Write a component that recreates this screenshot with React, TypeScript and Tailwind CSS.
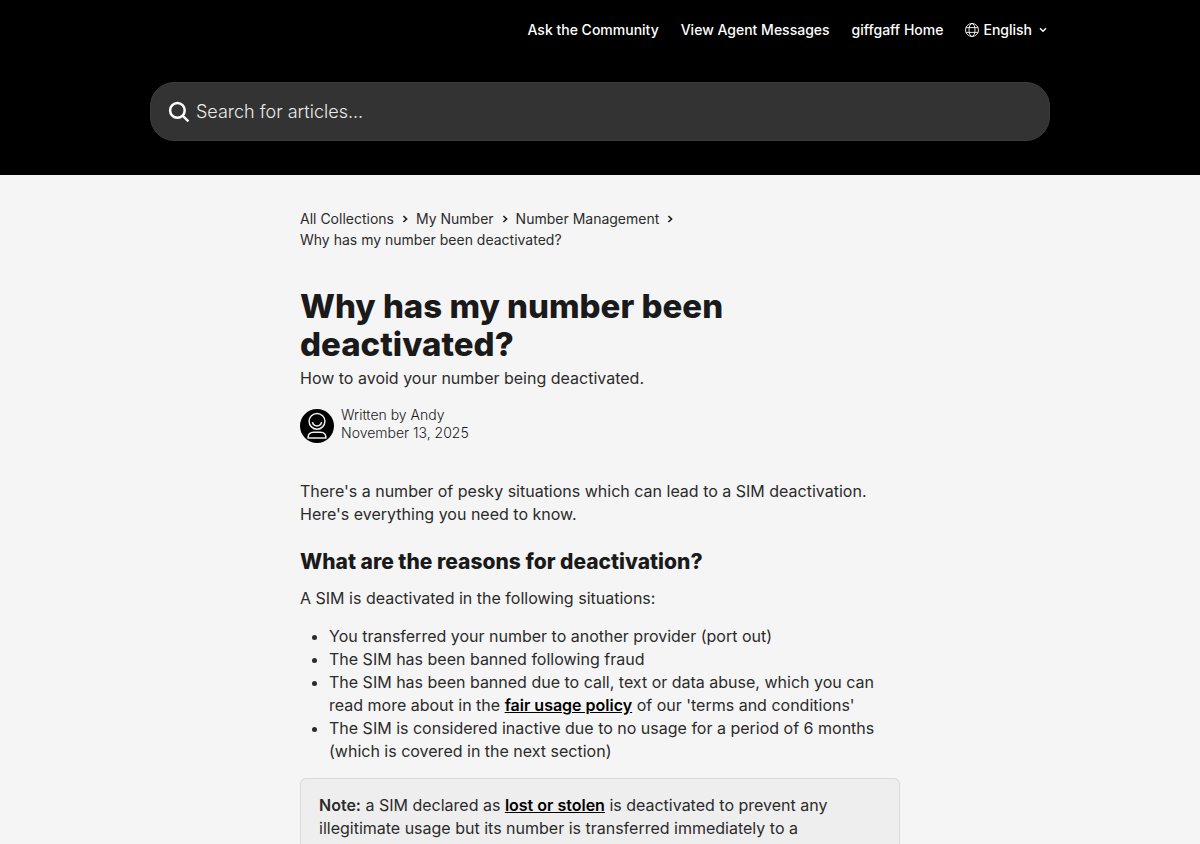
import React from "react";

const navLinks = ["Ask the Community", "View Agent Messages", "giffgaff Home"];
const crumbs = ["All Collections", "My Number", "Number Management"];

function GlobeIcon() {
  return (
    <svg width="14" height="14" viewBox="0 0 14 14" fill="none" stroke="currentColor" strokeWidth="0.9" aria-hidden="true">
      <circle cx="7" cy="7" r="6.5" />
      <ellipse cx="7" cy="7" rx="3" ry="6.5" />
      <path d="M1 4.6h12M1 9.4h12" />
    </svg>
  );
}

function SearchIcon() {
  return (
    <svg width="22" height="22" viewBox="0 0 22 22" fill="none" stroke="white" strokeWidth="2.5" aria-hidden="true">
      <circle cx="9.4" cy="9.4" r="7.3" />
      <path d="M14.6 14.6l5.8 5.8" />
    </svg>
  );
}

function CrumbArrow() {
  return (
    <svg width="6" height="8" viewBox="0 0 6 8" fill="none" stroke="#1a1a1a" strokeWidth="1.6" aria-hidden="true">
      <path d="M1.4 1L4.6 4L1.4 7" />
    </svg>
  );
}

function Avatar() {
  return (
    <svg className="shrink-0" width="34" height="34" viewBox="0 0 34 34" fill="none" stroke="#ededed" strokeWidth="1.5" aria-hidden="true">
      <circle cx="17" cy="17" r="17" fill="black" stroke="none" />
      <circle cx="17" cy="12.3" r="7.9" />
      <path d="M12.4 13.2a4.7 4.7 0 0 0 9.2 0" />
      <path d="M8 29c0-4 2.6-5.8 5.6-5.8h6.8c3 0 5.6 1.8 5.6 5.8z" strokeLinejoin="round" />
    </svg>
  );
}

export default function App() {
  return (
    <div className="min-h-screen bg-[#f5f5f5] font-['Inter',sans-serif] font-normal text-[#1a1a1a]">
      <header className="bg-black px-5 pb-[34px] text-white">
        <div className="mx-auto max-w-[900px]">
          <div className="flex h-[60px] items-center justify-end gap-[22px] text-sm font-medium">
            {navLinks.map((label) => (
              <a key={label} href="#" className="whitespace-nowrap">{label}</a>
            ))}
            <button type="button" className="flex items-center gap-1 pr-[3px]">
              <GlobeIcon />
              <span>English</span>
              <svg className="ml-[3px]" width="8" height="6" viewBox="0 0 8 6" fill="none" stroke="currentColor" strokeWidth="1.5" aria-hidden="true">
                <path d="M1 1.2L4 4.2L7 1.2" />
              </svg>
            </button>
          </div>
          <form className="mt-[22px] flex h-[59px] items-center gap-[6px] rounded-[24px] border border-[#3b3b3b] bg-[#333] pr-5 pl-[17px]">
            <SearchIcon />
            <input
              type="text"
              aria-label="Search for articles..."
              placeholder="Search for articles..."
              className="min-w-0 grow bg-transparent text-lg font-light text-white outline-none placeholder:text-[#ebebeb]"
            />
          </form>
        </div>
      </header>
      <main className="mx-auto max-w-[640px] px-5 pt-[33px]">
        <nav aria-label="Breadcrumb" className="flex flex-wrap items-center gap-x-2 text-sm leading-[21px] text-[#2b2b2b]">
          {crumbs.map((label) => (
            <React.Fragment key={label}>
              <a href="#">{label}</a>
              <CrumbArrow />
            </React.Fragment>
          ))}
          <span className="w-full">Why has my number been deactivated?</span>
        </nav>
        <h1 className="mt-[37px] text-[33px] leading-[38px] font-extrabold">Why has my number been deactivated?</h1>
        <p className="mt-[3px] text-base leading-6 text-[#2b2b2b]">How to avoid your number being deactivated.</p>
        <div className="mt-4 flex items-center gap-[7px] text-sm leading-[18px]">
          <Avatar />
          <div className="pb-1 font-light">
            <div>Written by Andy</div>
            <div>November 13, 2025</div>
          </div>
        </div>
        <article className="mt-[34px] text-base leading-[23px] text-[#2b2b2b]">
          <p>There's a number of pesky situations which can lead to a SIM deactivation. Here's everything you need to know.</p>
          <h2 className="mt-6 text-[21px] leading-6 font-extrabold text-[#1a1a1a]">What are the reasons for deactivation?</h2>
          <p className="mt-[13px]">A SIM is deactivated in the following situations:</p>
          <ul className="mt-[15px] list-disc pl-[29px]">
            <li>You transferred your number to another provider (port out)</li>
            <li>The SIM has been banned following fraud</li>
            <li>
              The SIM has been banned due to call, text or data abuse, which you can read more about in the{" "}
              <a href="#" className="font-semibold text-black underline">fair usage policy</a> of our 'terms and conditions'
            </li>
            <li>The SIM is considered inactive due to no usage for a period of 6 months (which is covered in the next section)</li>
          </ul>
          <aside className="mt-[15px] rounded-md border border-[#d9d9d9] bg-[#eee] px-[18px] py-[15px]">
            <p>
              <b className="font-semibold">Note:</b> a SIM declared as{" "}
              <a href="#" className="font-semibold text-black underline">lost or stolen</a> is deactivated to prevent any illegitimate usage but its number is transferred immediately to a
            </p>
          </aside>
        </article>
      </main>
    </div>
  );
}
